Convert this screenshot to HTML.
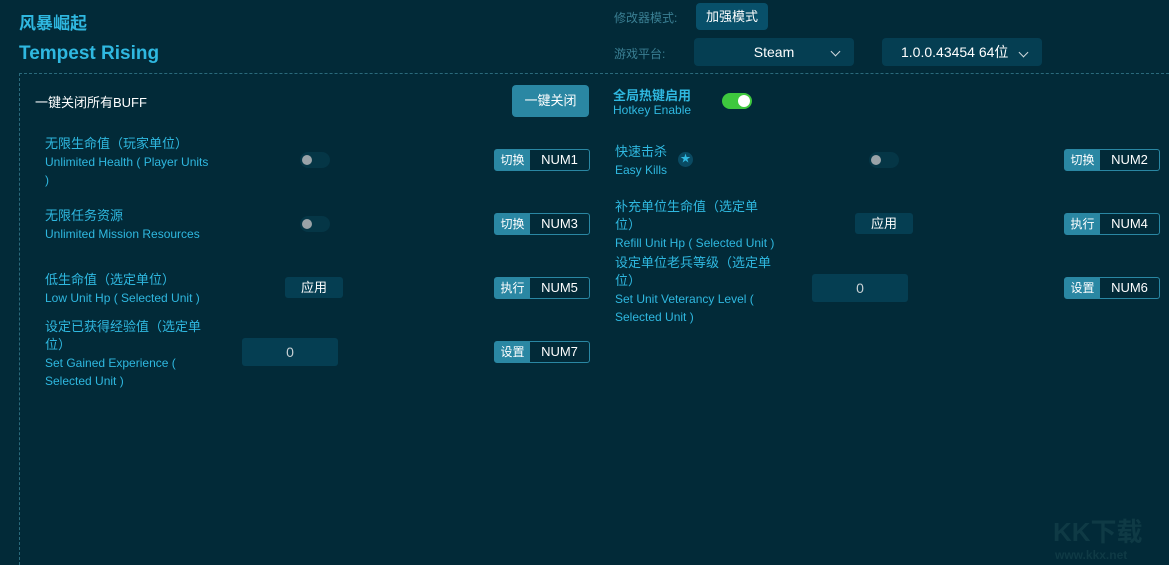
<!DOCTYPE html>
<html style="overflow:hidden"><head><meta charset="utf-8"><style>
*{margin:0;padding:0;box-sizing:border-box}
html,body{overflow:hidden}
body{width:1169px;height:565px;background:#022a38;font-family:"Liberation Sans","Noto Sans CJK SC",sans-serif;position:relative;color:#2fb8e0}
.a{position:absolute;white-space:nowrap}
.t1{left:19px;top:9px;font-size:17px;font-weight:bold;color:#2fb8e0}
.t2{left:19px;top:43px;font-size:19px;font-weight:bold;color:#2fb8e0}
.gl{font-size:12px;color:#3a7f93}
.btn{position:absolute;background:#053e52;color:#fff;border-radius:4px;text-align:center;font-size:13px}
.box{position:absolute;left:19px;top:73px;width:1150px;height:492px;border-top:1px dashed #2a6a7c;border-left:1px dashed #2a6a7c}
.lab{position:absolute;font-size:13px;line-height:18px;color:#2fb8e0}
.lab small{font-size:12px;display:block;line-height:18px}
.tg{position:absolute;width:30px;height:16px;border-radius:8px;background:#053646}
.tg::after{content:"";position:absolute;left:2px;top:3px;width:10px;height:10px;border-radius:50%;background:#9aa3a8}
.hk{position:absolute;width:96px;height:22px;border:1px solid #2a87a3;border-radius:3px;display:flex;font-size:13px}
.hk b{width:35px;background:#2a87a3;color:#fff;font-weight:normal;font-size:12px;text-align:center;line-height:20px}
.hk span{flex:1;color:#fff;text-align:center;line-height:20px}
.ap{position:absolute;background:#053e52;color:#fff;border-radius:3px;text-align:center;font-size:13px;line-height:21px;width:58px;height:21px}
.in{position:absolute;background:#053e52;color:#c8d0d4;border-radius:3px;text-align:center;font-size:14px;width:96px;height:28px;line-height:28px}
.chev{position:absolute;width:7px;height:7px;border-right:1.3px solid #cfd8dc;border-bottom:1.3px solid #cfd8dc;transform:rotate(45deg)}
</style></head><body>
<div class="a t1">风暴崛起</div>
<div class="a t2">Tempest Rising</div>
<div class="a gl" style="left:614px;top:9px">修改器模式:</div>
<div class="btn" style="left:696px;top:3px;width:72px;height:27px;line-height:27px;background:#08506a">加强模式</div>
<div class="a gl" style="left:614px;top:45px">游戏平台:</div>
<div class="btn" style="left:694px;top:38px;width:160px;height:28px;line-height:28px;font-size:14px">Steam</div>
<div class="chev" style="left:832px;top:48px"></div>
<div class="btn" style="left:882px;top:38px;width:160px;height:28px;line-height:28px;font-size:14px;text-align:left;padding-left:19px">1.0.0.43454 64位</div>
<div class="chev" style="left:1020px;top:49px"></div>
<div class="box"></div>
<div class="a" style="left:35px;top:92px;font-size:13px;color:#fff">一键关闭所有BUFF</div>
<div class="btn" style="left:512px;top:85px;width:77px;height:32px;line-height:32px;background:#2a87a3">一键关闭</div>
<div class="a" style="left:613px;top:85px;font-size:13px;font-weight:bold;color:#2fb8e0">全局热键启用</div>
<div class="a" style="left:613px;top:103px;font-size:12px;color:#2fb8e0">Hotkey Enable</div>
<div style="position:absolute;left:722px;top:93px;width:30px;height:16px;border-radius:8px;background:#3ec83e"><div style="position:absolute;right:2px;top:2px;width:12px;height:12px;border-radius:50%;background:#fff"></div></div>

<div class="lab" style="left:45px;top:135px">无限生命值（玩家单位）<small>Unlimited Health ( Player Units<br>)</small></div>
<div class="tg" style="left:300px;top:152px"></div>
<div class="hk" style="left:494px;top:149px"><b>切换</b><span>NUM1</span></div>

<div class="lab" style="left:45px;top:207px">无限任务资源<small>Unlimited Mission Resources</small></div>
<div class="tg" style="left:300px;top:216px"></div>
<div class="hk" style="left:494px;top:213px"><b>切换</b><span>NUM3</span></div>

<div class="lab" style="left:45px;top:271px">低生命值（选定单位）<small>Low Unit Hp ( Selected Unit )</small></div>
<div class="ap" style="left:285px;top:277px">应用</div>
<div class="hk" style="left:494px;top:277px"><b>执行</b><span>NUM5</span></div>

<div class="lab" style="left:45px;top:318px">设定已获得经验值（选定单<br>位）<small>Set Gained Experience (<br>Selected Unit )</small></div>
<div class="in" style="left:242px;top:338px">0</div>
<div class="hk" style="left:494px;top:341px"><b>设置</b><span>NUM7</span></div>

<div class="lab" style="left:615px;top:143px">快速击杀<small>Easy Kills</small></div>
<div style="position:absolute;left:678px;top:152px;width:15px;height:15px;border-radius:50%;background:#0a4a62;color:#2fb8e0;font-size:10px;text-align:center;line-height:15px">★</div>
<div class="tg" style="left:869px;top:152px"></div>
<div class="hk" style="left:1064px;top:149px"><b>切换</b><span>NUM2</span></div>

<div class="lab" style="left:615px;top:198px">补充单位生命值（选定单<br>位）<small>Refill Unit Hp ( Selected Unit )</small></div>
<div class="ap" style="left:855px;top:213px">应用</div>
<div class="hk" style="left:1064px;top:213px"><b>执行</b><span>NUM4</span></div>

<div class="lab" style="left:615px;top:254px">设定单位老兵等级（选定单<br>位）<small>Set Unit Veterancy Level (<br>Selected Unit )</small></div>
<div class="in" style="left:812px;top:274px">0</div>
<div class="hk" style="left:1064px;top:277px"><b>设置</b><span>NUM6</span></div>

<div class="a" style="left:1053px;top:512px;font-size:26px;font-weight:bold;color:#0f3a45">KK下载</div>
<div class="a" style="left:1055px;top:548px;font-size:12px;font-weight:bold;color:#0f3a45">www.kkx.net</div>
</body></html>
